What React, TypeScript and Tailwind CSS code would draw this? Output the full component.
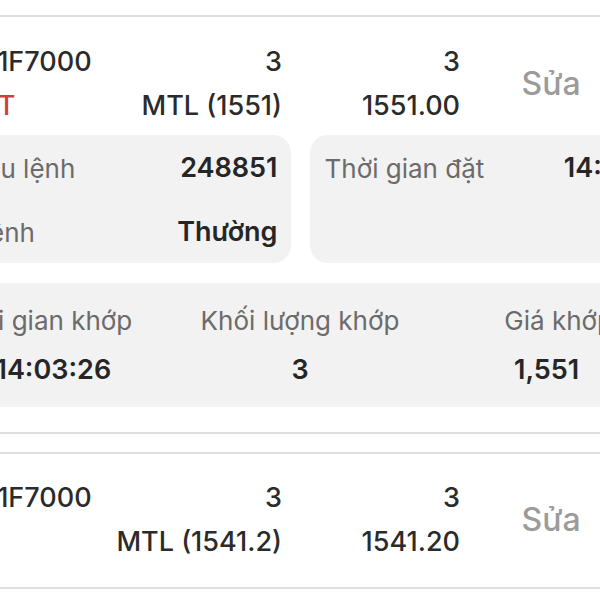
const orders = [
  {
    code: 'VN41I1F7000',
    side: 'SHORT',
    qty: '3',
    product: 'MTL (1551)',
    matched: '3',
    price: '1551.00',
  },
  {
    code: 'VN41I1F7000',
    side: '',
    qty: '3',
    product: 'MTL (1541.2)',
    matched: '3',
    price: '1541.20',
  },
];

function OrderHeader({ o }: { o: (typeof orders)[number] }) {
  return (
    <div className="flex pl-[22px] text-[27px] font-medium text-[#2b2b2b]">
      <div className="w-[206px] flex flex-col">
        <div className="h-[44px] leading-[44px] whitespace-nowrap">{o.code}</div>
        <div className="h-[44px] leading-[44px] text-[#d23c3c]">{o.side}</div>
      </div>
      <div className="w-[154px] flex flex-col items-end">
        <div className="h-[44px] leading-[44px]">{o.qty}</div>
        <div className="h-[44px] leading-[44px] whitespace-nowrap">{o.product}</div>
      </div>
      <div className="w-[178px] flex flex-col items-end">
        <div className="h-[44px] leading-[44px]">{o.matched}</div>
        <div className="h-[44px] leading-[44px]">{o.price}</div>
      </div>
      <div className="w-[182px] flex items-center justify-center text-[32px] text-[#9b9b9b]">Sửa</div>
    </div>
  );
}

function OrderDetail() {
  return (
    <>
      <div className="grid grid-cols-2 gap-[19px] px-[12px] mt-[7px]">
        <div className="h-[128px] pt-[1px] rounded-[18px] bg-[#f2f2f2] pl-[12px] pr-[13px]">
          <div className="h-[64px] flex items-center justify-between">
            <span className="text-[26px] text-[#6b6b6b]">Số hiệu lệnh</span>
            <span className="text-[27px] font-semibold text-[#262626]">248851</span>
          </div>
          <div className="h-[64px] flex items-center justify-between">
            <span className="text-[26px] text-[#6b6b6b]">Loại lệnh</span>
            <span className="text-[27px] font-semibold text-[#262626]">Thường</span>
          </div>
        </div>
        <div className="h-[128px] pt-[1px] rounded-[18px] bg-[#f2f2f2] pl-[15px] pr-[8px]">
          <div className="h-[64px] flex items-center justify-between">
            <span className="text-[26px] text-[#6b6b6b]">Thời gian đặt</span>
            <span className="text-[27px] font-semibold text-[#262626]">14:03:20</span>
          </div>
        </div>
      </div>
      <div className="mx-[12px] mt-[20px] rounded-[18px] bg-[#f2f2f2] pt-[16px] pb-[15px]">
        <div className="grid grid-cols-3 text-center text-[26px] text-[#6b6b6b] h-[44px] leading-[44px] whitespace-nowrap">
          <span>Thời gian khớp</span>
          <span>Khối lượng khớp</span>
          <span>Giá khớp</span>
        </div>
        <div className="grid grid-cols-3 px-[18px] mt-[5px] text-center text-[27px] font-semibold text-[#262626] h-[44px] leading-[44px]">
          <span>14:03:26</span>
          <span>3</span>
          <span>1,551</span>
        </div>
      </div>
    </>
  );
}

export default function App() {
  return (
    <div className="w-[600px] h-[600px] overflow-hidden bg-white font-[Inter,sans-serif]">
      <div className="-ml-[100px] w-[800px]">
        <div className="h-[15px]" />
        <div className="border-t-2 border-b-2 border-[#dedede] pt-[23px] pb-[25px]">
          <OrderHeader o={orders[0]} />
          <OrderDetail />
        </div>
        <div className="h-[18px]" />
        <div className="border-t-2 border-b-2 border-[#dedede] pt-[22px] pb-[23px]">
          <OrderHeader o={orders[1]} />
        </div>
      </div>
    </div>
  );
}
